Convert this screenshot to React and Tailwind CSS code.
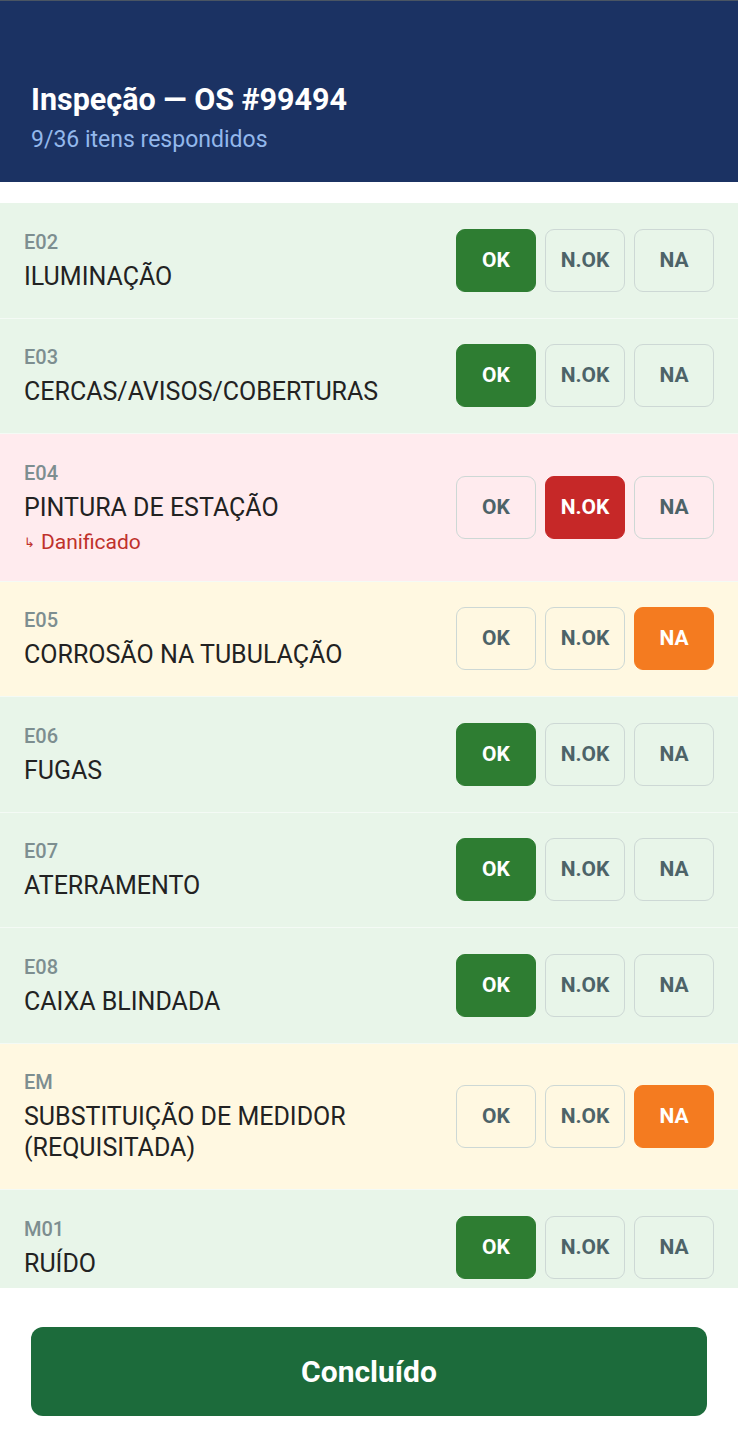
import React from "react";

const items = [
  { code: "E02", label: "ILUMINAÇÃO", value: "ok" },
  { code: "E03", label: "CERCAS/AVISOS/COBERTURAS", value: "ok" },
  { code: "E04", label: "PINTURA DE ESTAÇÃO", value: "nok", note: "Danificado" },
  { code: "E05", label: "CORROSÃO NA TUBULAÇÃO", value: "na" },
  { code: "E06", label: "FUGAS", value: "ok" },
  { code: "E07", label: "ATERRAMENTO", value: "ok" },
  { code: "E08", label: "CAIXA BLINDADA", value: "ok" },
  { code: "EM", label: "SUBSTITUIÇÃO DE MEDIDOR (REQUISITADA)", value: "na" },
  { code: "M01", label: "RUÍDO", value: "ok" },
];

const rowBg = {
  ok: "bg-[#e8f5e9]",
  nok: "bg-[#ffebee]",
  na: "bg-[#fff8e1]",
};

const options = [
  { key: "ok", text: "OK", active: "bg-[#2e7d32] border-[#2e7d32] text-white" },
  { key: "nok", text: "N.OK", active: "bg-[#c62828] border-[#c62828] text-white" },
  { key: "na", text: "NA", active: "bg-[#f47b20] border-[#f47b20] text-white" },
];

function Choice({ value }) {
  return (
    <div className="flex gap-[9px] shrink-0">
      {options.map((o) => (
        <button
          key={o.key}
          className={`w-[80px] h-[63px] rounded-[9px] border-[1.5px] text-[21px] font-bold flex items-center justify-center ${
            value === o.key ? o.active : "border-[#cdd8d5] text-[#4d6368]"
          }`}
        >
          {o.text}
        </button>
      ))}
    </div>
  );
}

function Row({ item }) {
  return (
    <div
      className={`flex items-center justify-between px-[24px] py-[25.75px] border-b border-[#f4faf5] ${rowBg[item.value]}`}
    >
      <div className="flex flex-col pr-4">
        <div className="text-[20px] leading-[27px] font-medium text-[#7d8e90] mb-[5px]">
          {item.code}
        </div>
        <div className="text-[25px] leading-[31px] text-[#222]">
          {item.label}
        </div>
        {item.note && (
          <div className="text-[21px] leading-[25px] text-[#c0312b] mt-[7px] flex items-center">
            <span className="text-[13px] mr-[6px]">↳</span>
            {item.note}
          </div>
        )}
      </div>
      <Choice value={item.value} />
    </div>
  );
}

export default function App() {
  const answered = 9;
  const total = 36;

  return (
    <div
      className="w-[738px] h-[1453px] flex flex-col bg-white overflow-hidden"
      style={{ fontFamily: "Roboto, 'Noto Sans', sans-serif" }}
    >
      <header className="h-[182px] shrink-0 bg-[#1b3263] border-t border-[#4a5563] px-[31px] pt-[80px]">
        <h1 className="text-[30.5px] leading-[38px] font-bold text-white">
          Inspeção — OS #99494
        </h1>
        <p className="text-[23px] leading-[28px] text-[#93b8ec] mt-[7px]">
          {answered}/{total} itens respondidos
        </p>
      </header>

      <div className="mt-[21px] flex-1 overflow-hidden">
        {items.map((item) => (
          <Row key={item.code} item={item} />
        ))}
      </div>

      <footer className="h-[165px] shrink-0 bg-white px-[31px] pt-[39px]">
        <button className="w-full h-[89px] rounded-[12px] bg-[#1c6b3b] text-white text-[30px] font-bold">
          Concluído
        </button>
      </footer>
    </div>
  );
}
